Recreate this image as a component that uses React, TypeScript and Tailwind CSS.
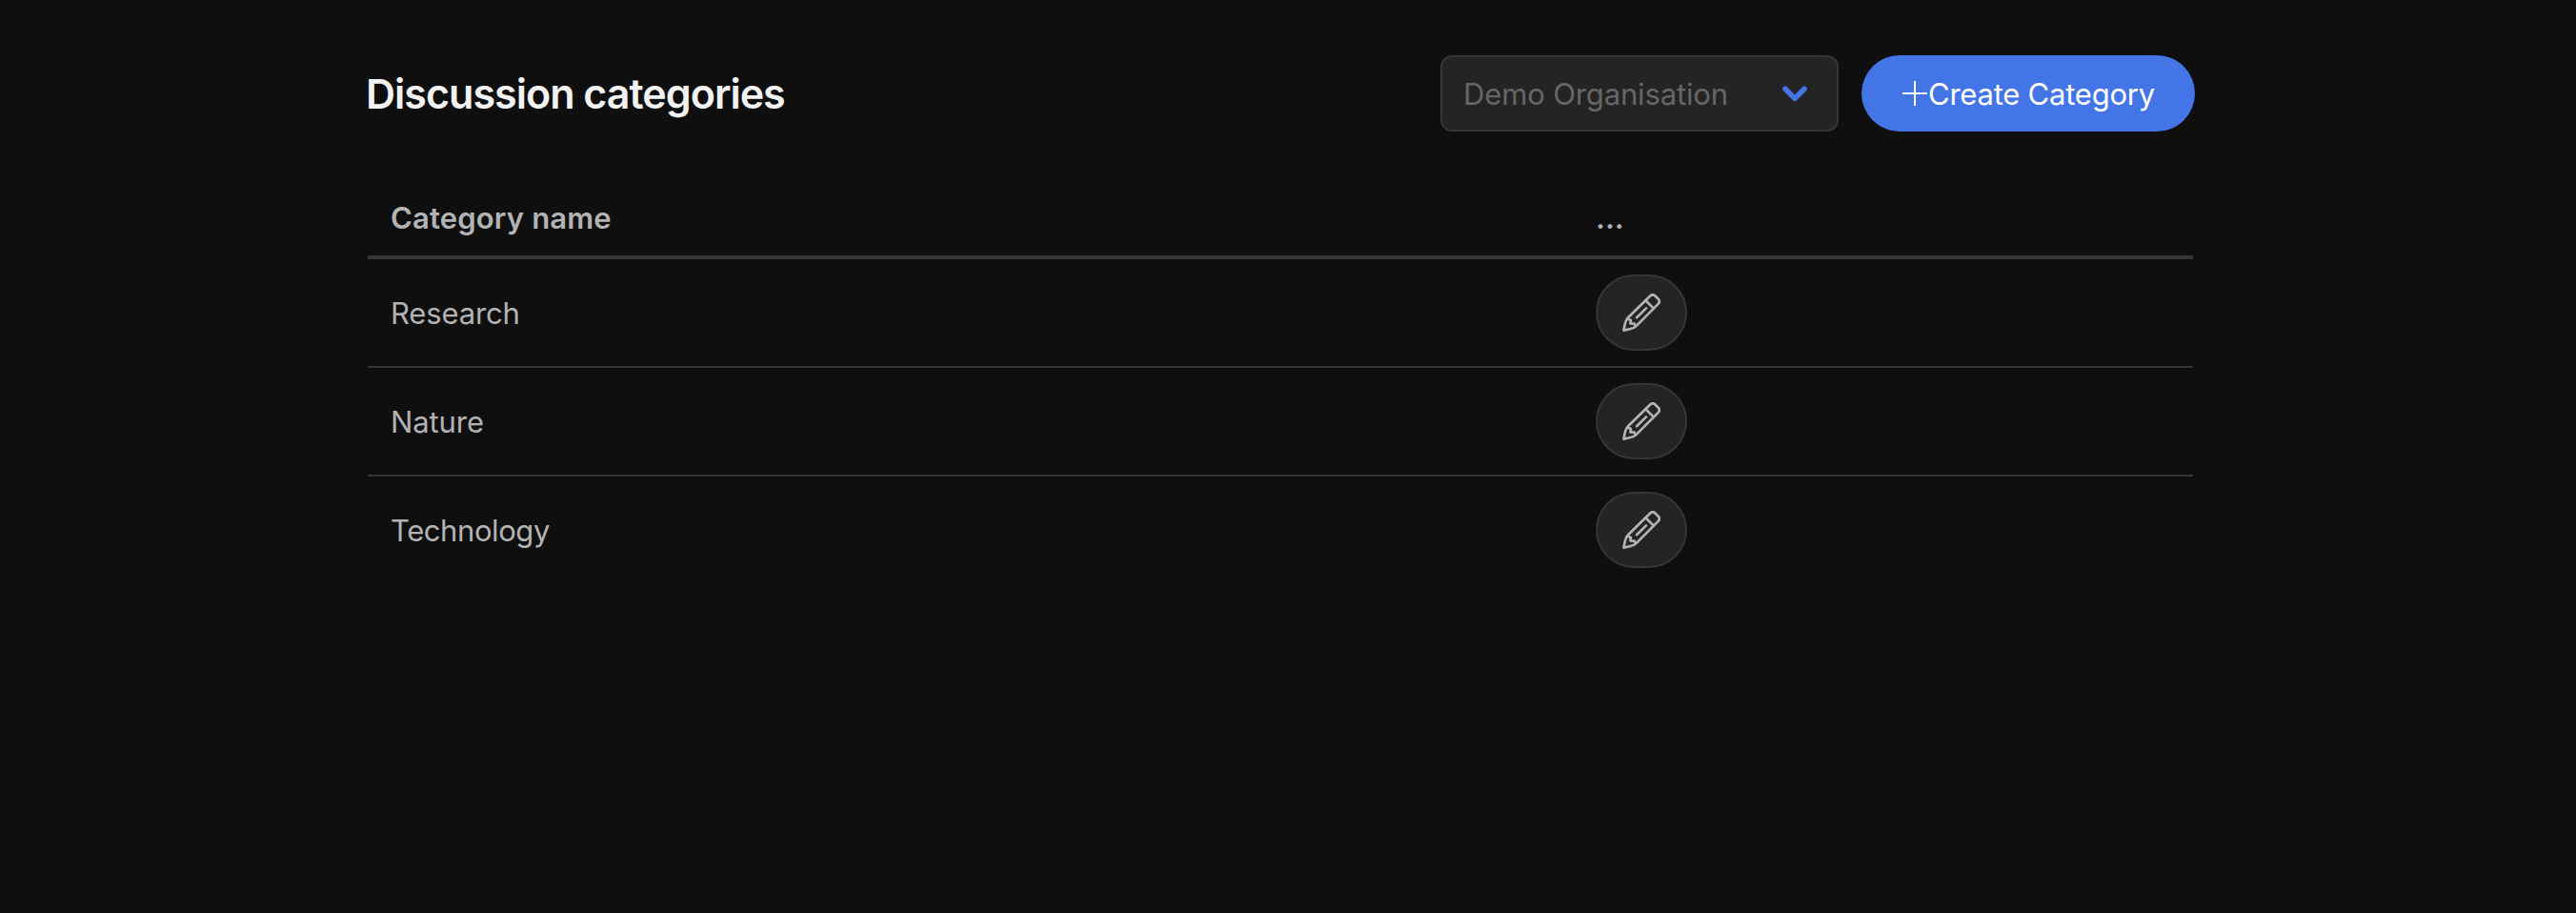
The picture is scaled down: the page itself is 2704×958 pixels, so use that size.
const rows = [
  { name: "Research", tracking: "tracking-[-0.15px]" },
  { name: "Nature", tracking: "tracking-[-0.1px]" },
  { name: "Technology", tracking: "tracking-[-0.42px]" },
];

function PencilIcon() {
  return (
    <svg
      viewBox="0 0 40 40"
      className="size-10"
      fill="none"
      stroke="currentColor"
      strokeWidth="2.7"
      strokeLinecap="round"
      strokeLinejoin="round"
    >
      <path d="M1.4 38.6 2.6 32.2C3.2 29.2 4.2 27 6.2 25L29.2 2.500c1.700-1.500 3.700-1.500 5.200 0l3.200 3.200c1.500 1.600 1.500 3.600 0 5.200L15 33.600c-2 2-4.200 3.100-7.200 3.700Z" />
      <path d="M24.400 7.200l8.400 8.400" />
      <path d="M15 25.300 25 15.400" />
      <path d="M5.500 26.600 8.900 28l-.5 3.400 4.200.2 1.300 2.800" />
    </svg>
  );
}

export default function App() {
  return (
    <main className="min-h-[958px] bg-[#0f0f0f] pt-[58px] pl-[384px] font-['Inter',sans-serif] text-[31px] text-[#b3b3b3]">
      <header className="flex h-20 w-[1920px] items-center justify-between">
        <h1 className="text-[43px] leading-[52px] font-semibold tracking-[-0.98px] text-[#f2f2f2]">
          Discussion categories
        </h1>
        <div className="flex gap-6">
          <button className="flex h-20 w-[418px] items-center justify-between rounded-xl border-2 border-[#363636] bg-[#242424] pr-[31px] pl-[22px] text-[#666]">
            <span className="pt-0.5 tracking-[-0.14px]">Demo Organisation</span>
            <svg
              viewBox="0 0 26 18"
              className="h-[18px] w-[26px]"
              fill="none"
              stroke="#4375e7"
              strokeWidth="5.6"
              strokeLinecap="round"
              strokeLinejoin="round"
            >
              <path d="M3 4.200 13 14.400 23 4.200" />
            </svg>
          </button>
          <button className="flex h-20 w-[350px] items-center rounded-full bg-[#4375e7] pl-[43px] text-white">
            <svg viewBox="0 0 26 26" className="size-[26px]" stroke="currentColor" strokeWidth="2">
              <path d="M13 0v26M0 13h26" />
            </svg>
            <span className="pt-0.5 pl-px tracking-[-0.23px]">Create Category</span>
          </button>
        </div>
      </header>
      <table className="mt-[50px] ml-[2px] w-[1916px] table-fixed border-separate border-spacing-0 text-left">
        <thead>
          <tr className="h-[84px]">
            <th className="w-[1265px] border-b-4 border-[#363636] px-6 pt-[3px] font-semibold tracking-[0.16px]">
              Category name
            </th>
            <th className="border-b-4 border-[#363636] px-6 pt-[3px] font-semibold">...</th>
          </tr>
        </thead>
        <tbody>
          {rows.map(({ name, tracking }) => (
            <tr key={name} className="group">
              <td className="border-b-2 border-[#363636] px-6 pt-0.5 group-last:border-0">
                <span className={tracking}>{name}</span>
              </td>
              <td className="border-b-2 border-[#363636] px-6 py-4 group-last:border-0">
                <button
                  aria-label={`Edit ${name}`}
                  className="flex h-20 w-24 items-center justify-center rounded-full border-2 border-[#363636] bg-[#242424]"
                >
                  <PencilIcon />
                </button>
              </td>
            </tr>
          ))}
        </tbody>
      </table>
    </main>
  );
}
